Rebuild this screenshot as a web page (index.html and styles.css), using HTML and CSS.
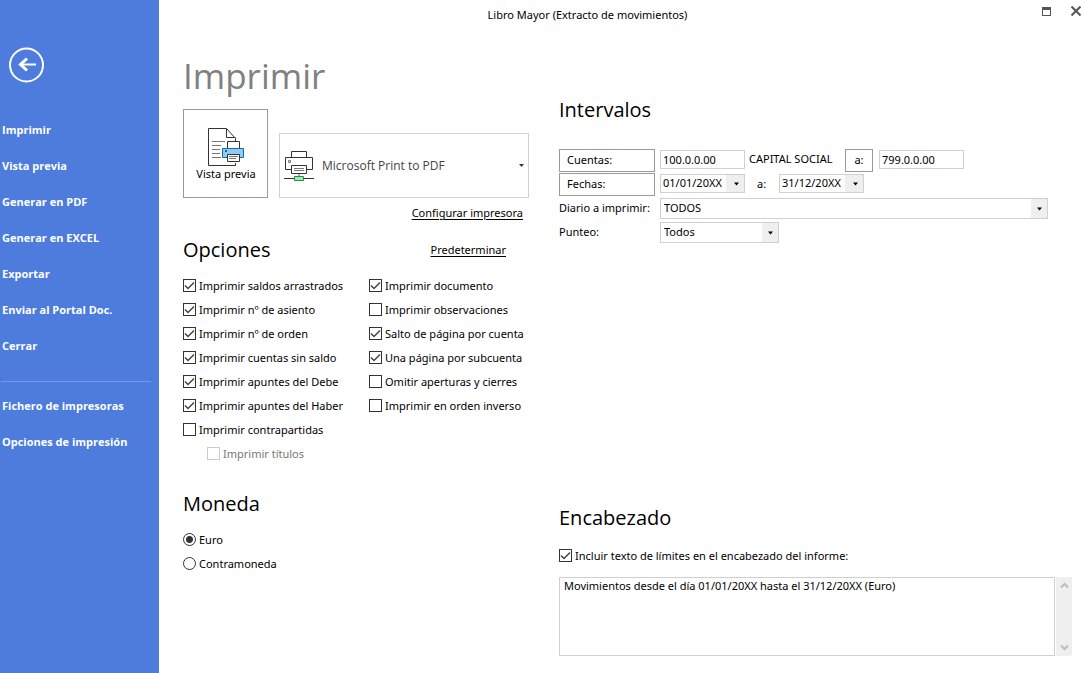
FILE: index.html
```html
<!DOCTYPE html>
<html lang="es">
<head>
<meta charset="utf-8">
<meta name="viewport" content="width=device-width, initial-scale=1">
<title>Libro Mayor (Extracto de movimientos)</title>
<link rel="stylesheet" href="styles.css">
</head>
<body>
<div class="window">
  <nav class="sidebar">
    <button class="back" type="button" aria-label="Volver">
      <svg width="36" height="36" viewBox="0 0 36 36" fill="none" stroke="#fff"><circle cx="17.500" cy="18" r="16.500" stroke-width="2"/><path d="M27 17.500H11" stroke-width="2"/><path d="M18 11.500L11.500 17.500L18 23.500" stroke-width="3"/></svg>
    </button>
    <ul class="menu">
      <li><a href="#">Imprimir</a></li>
      <li><a href="#">Vista previa</a></li>
      <li><a href="#">Generar en PDF</a></li>
      <li><a href="#">Generar en EXCEL</a></li>
      <li><a href="#">Exportar</a></li>
      <li><a href="#">Enviar al Portal Doc.</a></li>
      <li><a href="#">Cerrar</a></li>
    </ul>
    <ul class="menu menu-extra">
      <li><a href="#">Fichero de impresoras</a></li>
      <li><a href="#">Opciones de impresión</a></li>
    </ul>
  </nav>

  <div class="main">
    <header class="titlebar">
      <span class="caption">Libro Mayor (Extracto de movimientos)</span>
      <div class="window-buttons">
        <button type="button" aria-label="Maximizar"><svg width="9" height="9" viewBox="0 0 9 9"><path d="M0 0H9V9H0ZM1 3V8H8V3Z" fill="#555" fill-rule="evenodd"/></svg></button>
        <button type="button" aria-label="Cerrar ventana"><svg width="10" height="10" viewBox="0 0 10 10"><path d="M.5 .5L9.500 9.500M9.500 .5L.5 9.500" stroke="#555" stroke-width="2"/></svg></button>
      </div>
    </header>

    <div class="columns">
      <div class="col-left">
        <h1>Imprimir</h1>
        <div class="printer-row">
          <button class="preview" type="button">
            <svg width="38" height="38" viewBox="0 0 38 38" fill="none" stroke="#333"><path d="M28.500 13V10.500L19.500 .5H1.500V37.500H28.500V35" fill="#fff"/><path d="M19.500 1V9.500H28.500"/><path d="M5 13.500H18M5 17.500H14M5 21.500H13M5 25.500H13M5 29.500H14" stroke="#777"/><path d="M20.500 20V13.500H32.500V20" fill="#fff"/><path d="M15.500 20.500H36.500V29.500H15.500Z" fill="#91c9f0" stroke="#1268b3"/><path d="M18 22H20V24H18Z" fill="#1268b3" stroke="none"/><path d="M20.500 26.500H32.500V33.500H20.500Z" fill="#fff"/><path d="M22 28.500H31M22 30.500H29" stroke="#777"/></svg>
            <span>Vista previa</span>
          </button>
          <div class="printer">
            <svg width="30" height="32" viewBox="0 0 30 32" fill="none" stroke="#333"><path d="M7.500 7.500V1.500H22.500V7.500"/><path d="M7.500 19.500H1.500V7.500H28.500V19.500H22.500"/><path d="M4.500 10.500H6.500V12.500H4.500Z" stroke="#777"/><path d="M7.500 15.500H22.500V23.500H7.500Z" fill="#fff"/><path d="M10 18.500H20M10 20.500H20" stroke="#777"/><path d="M15 24V26" stroke="#aaa" stroke-width="2"/><path d="M0 28.500H30"/><path d="M10.500 26.500H19.500V30.500H10.500Z" fill="#b5dcc0" stroke="#12993a"/></svg>
            <select aria-label="Impresora"><option>Microsoft Print to PDF</option></select>
          </div>
        </div>
        <div class="link-line"><a href="#">Configurar impresora</a></div>
        <div class="options-head">
          <h2>Opciones</h2>
          <a href="#">Predeterminar</a>
        </div>
        <div class="options">
          <div class="checks">
            <label><input type="checkbox" checked>Imprimir saldos arrastrados</label>
            <label><input type="checkbox" checked>Imprimir nº de asiento</label>
            <label><input type="checkbox" checked>Imprimir nº de orden</label>
            <label><input type="checkbox" checked>Imprimir cuentas sin saldo</label>
            <label><input type="checkbox" checked>Imprimir apuntes del Debe</label>
            <label><input type="checkbox" checked>Imprimir apuntes del Haber</label>
            <label><input type="checkbox">Imprimir contrapartidas</label>
            <label class="nested"><input type="checkbox" disabled>Imprimir títulos</label>
          </div>
          <div class="checks">
            <label><input type="checkbox" checked>Imprimir documento</label>
            <label><input type="checkbox">Imprimir observaciones</label>
            <label><input type="checkbox" checked>Salto de página por cuenta</label>
            <label><input type="checkbox" checked>Una página por subcuenta</label>
            <label><input type="checkbox">Omitir aperturas y cierres</label>
            <label><input type="checkbox">Imprimir en orden inverso</label>
          </div>
        </div>
        <h2 class="currency-head">Moneda</h2>
        <div class="checks">
          <label><input type="radio" name="moneda" checked>Euro</label>
          <label><input type="radio" name="moneda">Contramoneda</label>
        </div>
      </div>

      <div class="col-right">
        <section>
          <h2>Intervalos</h2>
          <div class="ranges">
            <div class="range">
              <button class="field-button" type="button">Cuentas:</button>
              <input class="field" type="text" value="100.0.0.00" aria-label="Cuenta inicial">
              <span class="account-name">CAPITAL SOCIAL</span>
              <button class="to-button" type="button">a:</button>
              <input class="field" type="text" value="799.0.0.00" aria-label="Cuenta final">
            </div>
            <div class="range">
              <button class="field-button" type="button">Fechas:</button>
              <div class="field date"><input type="text" value="01/01/20XX" aria-label="Fecha inicial"><button type="button" aria-label="Abrir calendario inicial"></button></div>
              <span class="to">a:</span>
              <div class="field date"><input type="text" value="31/12/20XX" aria-label="Fecha final"><button type="button" aria-label="Abrir calendario final"></button></div>
            </div>
            <div class="range">
              <label class="field-label" for="diario">Diario a imprimir:</label>
              <select class="combo combo-wide" id="diario"><option>TODOS</option></select>
            </div>
            <div class="range">
              <label class="field-label" for="punteo">Punteo:</label>
              <select class="combo" id="punteo"><option>Todos</option></select>
            </div>
          </div>
        </section>
        <section class="heading-section">
          <h2>Encabezado</h2>
          <div class="checks"><label><input type="checkbox" checked>Incluir texto de límites en el encabezado del informe:</label></div>
          <div class="memo">
            <textarea aria-label="Texto del encabezado">Movimientos desde el día 01/01/20XX hasta el 31/12/20XX (Euro)</textarea>
            <div class="scroll">
              <button type="button" aria-label="Subir"><svg width="9" height="7" viewBox="0 0 9 7"><path d="M1 5.500L4.500 2L8 5.500" fill="none" stroke="#bbb" stroke-width="2"/></svg></button>
              <button type="button" aria-label="Bajar"><svg width="9" height="7" viewBox="0 0 9 7"><path d="M1 1.500L4.500 5L8 1.500" fill="none" stroke="#bbb" stroke-width="2"/></svg></button>
            </div>
          </div>
        </section>
      </div>
    </div>
  </div>
</div>
</body>
</html>
```
FILE: styles.css
```css
* { box-sizing: border-box; }
body { margin: 0; background: #fff; color: #000; font: 11px/16px "Noto Sans", "Open Sans", sans-serif; }
button, input, select, textarea { margin: 0; padding: 0; border: 0; border-radius: 0; background: none; color: inherit; font: inherit; }
select { appearance: none; }
a { color: inherit; }
h1, h2 { margin: 0; font-family: "Open Sans", sans-serif; }
h1 { color: #808080; font-size: 35px; font-weight: 400; line-height: 54px; }
h2 { font-size: 20px; font-weight: 400; line-height: 28px; }

.window { display: flex; min-height: 100vh; }

.sidebar { flex: 0 0 159px; padding: 47px 8px 0 0; background: #4d7cdc; color: #fff; }
.back { display: block; width: 36px; height: 36px; margin-left: 9px; }
.back svg { display: block; }
.menu { margin: 29px 0 0; padding: 0; list-style: none; }
.menu a { display: block; padding-left: 2px; font-size: 11px; font-weight: 700; font-family: "Open Sans", sans-serif; line-height: 36px; text-decoration: none; }
.menu-extra { margin: 17px 0 0 1px; padding-top: 6px; border-top: 1px solid #7398e6; }
.menu-extra a { padding-left: 1px; }

.main { flex: 1; display: flex; flex-direction: column; min-width: 0; }
.titlebar { display: flex; height: 30px; align-items: center; }
.caption { flex: 1; text-align: center; }
.window-buttons { display: flex; flex: 0 0 68px; gap: 20px; padding: 0 3px 8px 0; justify-content: flex-end; align-items: center; }
.window-buttons button { display: flex; }

.columns { flex: 1; display: grid; grid-template-columns: 346px minmax(0, 1fr); gap: 30px; padding: 0 12px 17px 24px; }
.col-left { padding-top: 19px; }
.col-right { display: flex; flex-direction: column; justify-content: space-between; padding-top: 66px; }

.printer-row { display: flex; justify-content: space-between; align-items: flex-end; margin-top: 6px; }
.preview { display: flex; flex-direction: column; align-items: center; justify-content: center; width: 85px; height: 89px; padding: 3px 0 0 1px; border: 1px solid #999; }
.printer { display: flex; align-items: center; width: 250px; height: 65px; padding-left: 4px; border: 1px solid #d0d0d0; }
.printer select { flex: 1; height: 63px; padding-left: 8px; color: #444; font-size: 12px; line-height: 16px; font-family: "Open Sans", sans-serif; background: url("data:image/svg+xml,%3Csvg xmlns='http://www.w3.org/2000/svg' width='5' height='3'%3E%3Cpath d='M0 0H5L2.500 3Z' fill='%23333'/%3E%3C/svg%3E") no-repeat right 4px center; }
.link-line { margin-top: 7px; padding-right: 6px; text-align: right; }
.options-head { display: flex; justify-content: space-between; align-items: center; margin-top: 15px; padding-right: 23px; }
.link-line a, .options-head a { text-underline-offset: 2px; }

.options { display: grid; grid-template-columns: 186px 1fr; margin-top: 10px; }
.checks label { display: flex; gap: 3px; align-items: center; height: 24px; white-space: nowrap; }
.checks .nested { padding-left: 24px; color: #777; }
.currency-head { margin-top: 24px; margin-bottom: 10px; }
input[type="checkbox"], input[type="radio"] { appearance: none; flex: none; width: 13px; height: 13px; margin-bottom: 1px; border: 1px solid #333; }
input[type="checkbox"]:checked { background: url("data:image/svg+xml,%3Csvg xmlns='http://www.w3.org/2000/svg' width='11' height='11'%3E%3Cpath d='M1 5.500L4 8.500L10 2.500' fill='none' stroke='%23444' stroke-width='1.500'/%3E%3C/svg%3E") no-repeat center; }
input[type="checkbox"]:disabled { border-color: #ccc; }
input[type="radio"] { border-radius: 50%; }
input[type="radio"]:checked { background: radial-gradient(circle, #333 3px, #fff 4px); }

.ranges { margin-top: 24px; }
.range { display: flex; align-items: center; height: 24px; }
.field-button, .to-button { height: 23px; border: 1px solid #999; }
.field-button { width: 96px; margin-right: 5px; padding-left: 7px; text-align: left; }
.to-button { width: 28px; margin-right: 6px; }
.field-label { width: 101px; }
.field { width: 85px; height: 19px; padding-left: 2px; border: 1px solid #d0d0d0; }
.range > .field, .account-name { margin-bottom: 2px; }
.account-name { width: 100px; padding-left: 4px; }
.to { width: 34px; padding-left: 12px; }
.date { display: flex; }
.date input { width: 63px; }
.date button, .combo { background: url("data:image/svg+xml,%3Csvg xmlns='http://www.w3.org/2000/svg' width='16' height='40'%3E%3Cpath d='M0 0H16V40H0Z' fill='%23efefef'/%3E%3Cpath d='M6 19H11L8.500 22Z'/%3E%3C/svg%3E") no-repeat right center; }
.date button { flex: 1; background-color: #efefef; }
.combo { width: 119px; height: 21px; padding-left: 3px; border: 1px solid #d0d0d0; }
.combo-wide { flex: 1; margin-right: 24px; }

.heading-section .checks { margin-top: 12px; }
.memo { display: flex; gap: 1px; margin-top: 9px; }
.memo textarea { flex: 1; min-width: 0; height: 79px; padding: 0 4px; border: 1px solid #d0d0d0; resize: none; overflow: hidden; }
.scroll { display: flex; flex: 0 0 16px; flex-direction: column; justify-content: space-between; padding: 5px 0; background: #efefef; }
.scroll button { display: flex; justify-content: center; }
```
